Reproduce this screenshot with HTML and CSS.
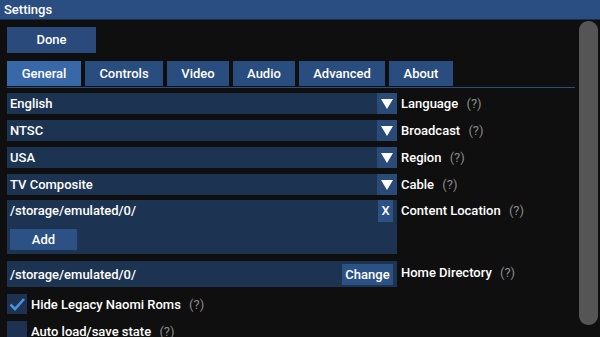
FILE: index.html
```html
<!DOCTYPE html>
<html lang="en">
<head>
	<meta charset="UTF-8">
	<title>Settings</title>
	<link rel="stylesheet" href="styles.css">
</head>
<body>
	<div class="title-bar">Settings</div>
	<div class="page">
		<div class="content">
			<div class="done-btn">Done</div>
			<div class="tabs">
				<div class="tab tab-active w-general">General</div>
				<div class="tab w-controls">Controls</div>
				<div class="tab w-video">Video</div>
				<div class="tab w-audio">Audio</div>
				<div class="tab w-advanced">Advanced</div>
				<div class="tab w-about">About</div>
			</div>

			<div class="row row-first">
				<div class="combo"><span class="combo-text">English</span><span class="arrow"><svg width="12" height="10" viewBox="0 0 12 10"><polygon points="0,0 12,0 6,10" fill="#fff"/></svg></span></div>
				<div class="label">Language <span class="help">(?)</span></div>
			</div>
			<div class="row">
				<div class="combo"><span class="combo-text">NTSC</span><span class="arrow"><svg width="12" height="10" viewBox="0 0 12 10"><polygon points="0,0 12,0 6,10" fill="#fff"/></svg></span></div>
				<div class="label">Broadcast <span class="help">(?)</span></div>
			</div>
			<div class="row">
				<div class="combo"><span class="combo-text">USA</span><span class="arrow"><svg width="12" height="10" viewBox="0 0 12 10"><polygon points="0,0 12,0 6,10" fill="#fff"/></svg></span></div>
				<div class="label">Region <span class="help">(?)</span></div>
			</div>
			<div class="row">
				<div class="combo"><span class="combo-text">TV Composite</span><span class="arrow"><svg width="12" height="10" viewBox="0 0 12 10"><polygon points="0,0 12,0 6,10" fill="#fff"/></svg></span></div>
				<div class="label">Cable <span class="help">(?)</span></div>
			</div>

			<div class="row row-top">
				<div class="box">
					<div class="box-line">
						<span class="combo-text">/storage/emulated/0/</span>
						<span class="small-btn x-btn">X</span>
					</div>
					<div class="add-btn">Add</div>
				</div>
				<div class="label">Content Location <span class="help">(?)</span></div>
			</div>

			<div class="row row-home">
				<div class="home">
					<span class="combo-text">/storage/emulated/0/</span>
					<span class="small-btn change-btn">Change</span>
				</div>
				<div class="label">Home Directory <span class="help">(?)</span></div>
			</div>

			<div class="check-row">
				<div class="check">
					<svg width="20" height="20" viewBox="0 0 20 20"><path d="M3.5 10.5 L8 15 L17 5" fill="none" stroke="#4a90e0" stroke-width="2.6"/></svg>
				</div>
				<div class="label">Hide Legacy Naomi Roms <span class="help">(?)</span></div>
			</div>
			<div class="check-row">
				<div class="check"></div>
				<div class="label">Auto load/save state <span class="help">(?)</span></div>
			</div>
		</div>
		<div class="scrollbar"></div>
	</div>
</body>
</html>
```

FILE: styles.css
```css
html, body{
	margin: 0;
	height: 100%;
	overflow: hidden;
}
body{
	background-color: #0f0f0f;
	color: #fff;
	font-family: Roboto, "Liberation Sans", sans-serif;
	font-size: 13px;
	font-weight: 500;
}
.title-bar{
	height: 19px;
	line-height: 19px;
	padding-left: 4px;
	background-color: #2b4e82;
	border-bottom: 1px solid #1a2e4c;
	font-size: 13px;
}
.page{
	display: flex;
	justify-content: space-between;
}
.content{
	padding-left: 7px;
	width: 568px;
}
.done-btn{
	margin-top: 7px;
	width: 89px;
	height: 26px;
	line-height: 26px;
	text-align: center;
	background-color: #294a7b;
}
.tabs{
	display: flex;
	gap: 4px;
	margin-top: 8px;
	border-bottom: 1px solid #2b4e82;
	padding-bottom: 1px;
}
.tab{
	height: 25px;
	line-height: 25px;
	text-align: center;
	background-color: #2a4d80;
}
.tab-active{
	background-color: #3868a8;
}
.w-general{ width: 74px; }
.w-controls{ width: 78px; }
.w-video{ width: 62px; }
.w-audio{ width: 62px; }
.w-advanced{ width: 86px; }
.w-about{ width: 64px; }

.row{
	display: flex;
	align-items: center;
	margin-top: 6px;
}
.row-first{
	margin-top: 5px;
}
.combo{
	display: flex;
	justify-content: space-between;
	align-items: center;
	width: 390px;
	height: 21px;
	background-color: #1c3352;
}
.combo-text{
	padding-left: 3px;
}
.arrow{
	display: flex;
	align-items: center;
	justify-content: center;
	width: 20px;
	height: 21px;
	background-color: #2a4a78;
}
.arrow svg{
	display: block;
}
.label{
	margin-left: 4px;
	white-space: nowrap;
}
.help{
	margin-left: 5px;
	color: #8a8a8a;
	font-weight: 400;
}
.row-top{
	margin-top: 5px;
	align-items: flex-start;
}
.row-top .label{
	margin-top: 3px;
}
.box{
	width: 390px;
	height: 54px;
	background-color: #1c3352;
}
.box-line{
	display: flex;
	justify-content: space-between;
	align-items: flex-start;
	height: 22px;
	line-height: 22px;
}
.small-btn{
	background-color: #2b5185;
	height: 21px;
	line-height: 21px;
	text-align: center;
	margin-right: 4px;
}
.x-btn{
	width: 15px;
	height: 22px;
	line-height: 22px;
}
.add-btn{
	margin: 7px 0 0 3px;
	width: 67px;
	height: 21px;
	line-height: 21px;
	text-align: center;
	background-color: #2b5185;
}
.row-home{
	margin-top: 7px;
	align-items: flex-start;
}
.row-home .label{
	margin-top: 4px;
}
.home{
	display: flex;
	justify-content: space-between;
	align-items: center;
	width: 390px;
	height: 26px;
	background-color: #1c3352;
}
.change-btn{
	width: 51px;
}
.check-row{
	display: flex;
	align-items: center;
	margin-top: 7px;
}
.check{
	width: 20px;
	height: 20px;
	background-color: #1e3150;
}
.check svg{
	display: block;
}
.scrollbar{
	margin: 1px 2px 0 0;
	width: 19px;
	height: 304px;
	border-radius: 9px;
	background-color: #555;
}
```
